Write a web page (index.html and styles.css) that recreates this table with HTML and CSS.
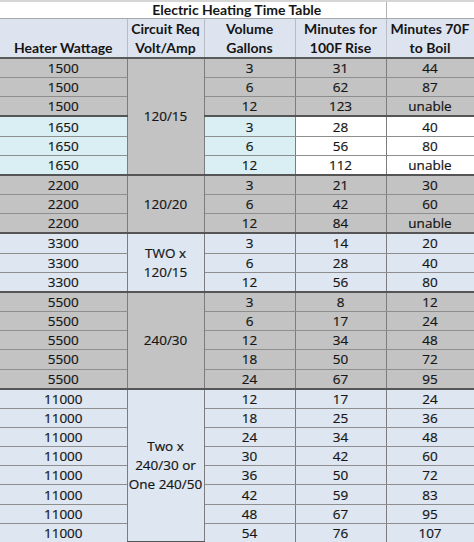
FILE: index.html
```html
<!DOCTYPE html>
<html lang="en">
<head>
<meta charset="utf-8">
<title>Electric Heating Time Table</title>
<link rel="stylesheet" href="styles.css">
</head>
<body>
<table class="heat">
  <colgroup>
    <col class="c1"><col class="c2"><col class="c3"><col class="c4"><col class="c5">
  </colgroup>
  <tr class="title-row">
    <td colspan="4" class="title">Electric Heating Time Table</td>
    <td class="blank"></td>
  </tr>
  <tr class="head-row">
    <th class="bottom">Heater Wattage</th>
    <th>Circuit Req<br>Volt/Amp</th>
    <th>Volume<br>Gallons</th>
    <th>Minutes for<br>100F Rise</th>
    <th>Minutes 70F<br>to Boil</th>
  </tr>

  <tr class="grey"><td>1500</td><td rowspan="6" class="circuit grey-c">120/15</td><td>3</td><td>31</td><td>44</td></tr>
  <tr class="grey"><td>1500</td><td>6</td><td>62</td><td>87</td></tr>
  <tr class="grey"><td>1500</td><td>12</td><td>123</td><td>unable</td></tr>
  <tr class="cyan sep"><td>1650</td><td>3</td><td class="white">28</td><td class="white">40</td></tr>
  <tr class="cyan"><td>1650</td><td>6</td><td class="white">56</td><td class="white">80</td></tr>
  <tr class="cyan"><td>1650</td><td>12</td><td class="white">112</td><td class="white">unable</td></tr>

  <tr class="grey sep"><td>2200</td><td rowspan="3" class="circuit grey-c">120/20</td><td>3</td><td>21</td><td>30</td></tr>
  <tr class="grey"><td>2200</td><td>6</td><td>42</td><td>60</td></tr>
  <tr class="grey"><td>2200</td><td>12</td><td>84</td><td>unable</td></tr>

  <tr class="blue sep"><td>3300</td><td rowspan="3" class="circuit blue-c">TWO x<br>120/15</td><td>3</td><td>14</td><td>20</td></tr>
  <tr class="blue"><td>3300</td><td>6</td><td>28</td><td>40</td></tr>
  <tr class="blue"><td>3300</td><td>12</td><td>56</td><td>80</td></tr>

  <tr class="grey sep"><td>5500</td><td rowspan="5" class="circuit grey-c">240/30</td><td>3</td><td>8</td><td>12</td></tr>
  <tr class="grey"><td>5500</td><td>6</td><td>17</td><td>24</td></tr>
  <tr class="grey"><td>5500</td><td>12</td><td>34</td><td>48</td></tr>
  <tr class="grey"><td>5500</td><td>18</td><td>50</td><td>72</td></tr>
  <tr class="grey"><td>5500</td><td>24</td><td>67</td><td>95</td></tr>

  <tr class="blue sep"><td>11000</td><td rowspan="8" class="circuit blue-c">Two x<br>240/30 or<br>One 240/50</td><td>12</td><td>17</td><td>24</td></tr>
  <tr class="blue"><td>11000</td><td>18</td><td>25</td><td>36</td></tr>
  <tr class="blue"><td>11000</td><td>24</td><td>34</td><td>48</td></tr>
  <tr class="blue"><td>11000</td><td>30</td><td>42</td><td>60</td></tr>
  <tr class="blue"><td>11000</td><td>36</td><td>50</td><td>72</td></tr>
  <tr class="blue"><td>11000</td><td>42</td><td>59</td><td>83</td></tr>
  <tr class="blue"><td>11000</td><td>48</td><td>67</td><td>95</td></tr>
  <tr class="blue"><td>11000</td><td>54</td><td>76</td><td>107</td></tr>
</table>
</body>
</html>
```

FILE: styles.css
```css
html, body {
  margin: 0;
  padding: 0;
  background: #ffffff;
}

body {
  font-family: "Open Sans", Lato, "Liberation Sans", sans-serif;
  font-size: 13.5px;
  color: #151515;
  overflow: hidden;
}

.heat {
  border-collapse: collapse;
  table-layout: fixed;
  width: 474px;
  border-top: 2px solid #d6d6d6;
}

.c1 { width: 127px; }
.c2 { width: 77px; }
.c3 { width: 91px; }
.c4 { width: 91px; }
.c5 { width: 88px; }

.heat td,
.heat th {
  padding: 0;
  text-align: center;
  vertical-align: middle;
  border-left: 1px solid #7c7c7c;
  border-right: 1px solid #7c7c7c;
  border-top: 1px solid #8e8e8e;
  border-bottom: 1px solid #8e8e8e;
  line-height: 18px;
  white-space: nowrap;
  -webkit-text-stroke: 0.2px #151515;
}

.heat tr td:first-child,
.heat tr th:first-child {
  border-left: none;
}

.title-row td {
  height: 16px;
  background: #ffffff;
  font-family: Lato, "Open Sans", sans-serif;
  font-size: 14px;
  font-weight: 700;
  border-top: none;
  border-bottom: 1px solid #a8a8a8;
  line-height: 16px;
  -webkit-text-stroke: 0;
}

.title-row .title {
  padding-left: 88px;
  border-right: 1px solid #b4b4b4;
}

.title-row .blank {
  border-right: 1px solid #9a9a9a;
}

.head-row th {
  height: 38px;
  background: #dde4ef;
  font-family: Lato, "Open Sans", sans-serif;
  font-size: 14px;
  font-weight: 700;
  line-height: 19px;
  border-bottom: 2px solid #5a5a5a;
  border-left-color: #b8bcc4;
  border-right-color: #b8bcc4;
  -webkit-text-stroke: 0;
}

.head-row th.bottom {
  vertical-align: bottom;
}

.heat tr.grey td,
.heat tr.cyan td,
.heat tr.blue td {
  height: 18.16px;
}

.grey td { background: #c3c3c3; }
.cyan td { background: #daeff4; }
.blue td { background: #dde6f1; }
.heat td.white { background: #ffffff; }
.heat td.grey-c { background: #c3c3c3; }
.heat td.blue-c { background: #dde6f1; }

.heat tr.sep td {
  border-top: 2px solid #555555;
}

.heat td.circuit {
  line-height: 19px;
  border-bottom: 2px solid #555555;
}
```
